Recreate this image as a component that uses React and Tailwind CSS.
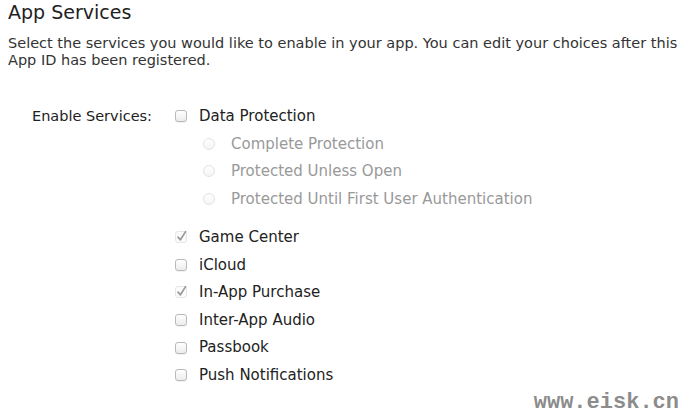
import React from 'react';

const font = { fontFamily: '"DejaVu Sans", sans-serif' };

const Checkbox = ({ checked }) => (
  <span className="relative flex h-[12px] w-[12px] items-center justify-center">
    {checked ? (
      <svg width="14" height="14" viewBox="0 0 14 14" className="absolute -top-[2px] left-0">
        <rect x="0.5" y="2.5" width="11" height="11" rx="2.5" fill="#fbfbfb" stroke="#e6e6e6" />
        <path d="M3 8.2 L5.4 10.8 L10.6 2.6" fill="none" stroke="#9a9a9a" strokeWidth="1.7" strokeLinecap="round" strokeLinejoin="round" />
      </svg>
    ) : (
      <span className="block h-[12px] w-[12px] rounded-[3px] border border-[#b9b9b9] bg-gradient-to-b from-white to-[#ececec] shadow-[0_1px_0_rgba(0,0,0,0.05)]" />
    )}
  </span>
);

const Radio = () => (
  <span className="block h-[12px] w-[12px] rounded-full border border-[#e3e3e3] bg-gradient-to-b from-white to-[#f5f5f5]" />
);

const services = [
  { name: 'Game Center', checked: true },
  { name: 'iCloud' },
  { name: 'In-App Purchase', checked: true },
  { name: 'Inter-App Audio' },
  { name: 'Passbook' },
  { name: 'Push Notifications' },
];

const protections = ['Complete Protection', 'Protected Unless Open', 'Protected Until First User Authentication'];

export default function App() {
  return (
    <div className="relative h-[420px] w-[690px] overflow-hidden bg-white text-[#333]" style={font}>
      <div className="px-[8px]">
        <h1 className="text-[19px] leading-[24px] text-[#222]">App Services</h1>
        <p className="mt-[11px] text-[14.5px] leading-[17px] text-[#333]">
          Select the services you would like to enable in your app. You can edit your choices after this App ID has been registered.
        </p>
      </div>

      <div className="mt-[33px] flex text-[15px] text-[#222]">
        <div className="w-[153px] pr-[1px] text-right text-[14.5px] leading-[28px]">Enable Services:</div>
        <div className="ml-[22px] flex flex-col">
          <label className="flex h-[28px] items-center gap-[12px]">
            <Checkbox />
            <span>Data Protection</span>
          </label>
          <div className="flex flex-col pl-[28px]">
            {protections.map((p) => (
              <label key={p} className="flex h-[27.5px] items-center gap-[16px] text-[#999]">
                <Radio />
                <span>{p}</span>
              </label>
            ))}
          </div>
          <div className="mt-[11px] flex flex-col">
            {services.map((s) => (
              <label key={s.name} className="flex h-[27.6px] items-center gap-[12px]">
                <Checkbox checked={s.checked} />
                <span>{s.name}</span>
              </label>
            ))}
          </div>
        </div>
      </div>

      <div
        className="absolute bottom-[6px] right-[11px] text-[22px] font-bold leading-none text-[#8c8c8c]"
        style={{ fontFamily: '"Liberation Mono", monospace' }}
      >
        www.eisk.cn
      </div>
    </div>
  );
}
